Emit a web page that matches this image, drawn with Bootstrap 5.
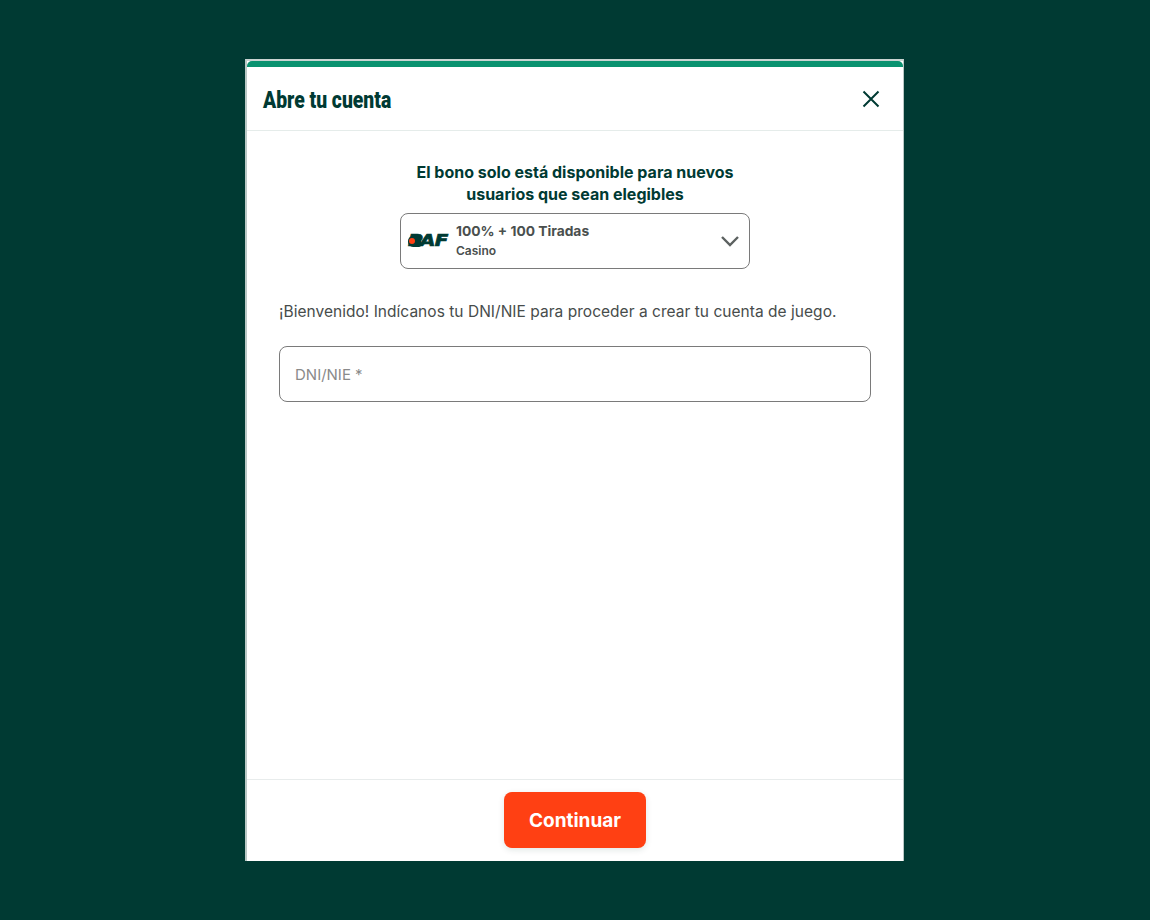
<!DOCTYPE html>
<html lang="es">
<head>
  <meta charset="UTF-8">
  <title>Abre tu cuenta</title>
  <link href="https://cdn.jsdelivr.net/npm/bootstrap@5.3.3/dist/css/bootstrap.min.css" rel="stylesheet">
  <style>
    body { background: #003A33; font-family: "Inter", "Noto Sans", sans-serif; height: 920px; overflow: hidden; }
    .page-wrap { height: 920px; padding-top: 59px; }
    .signup-box { width: 659px; height: 802px; margin-right: 1px; background: #fff; border: solid #b9c8c5; border-width: 2px 1px 0 2px; border-top-color: #c9d4d2; }
    .top-strip { height: 6px; background: #0A9270; border-radius: 5px 5px 0 0; }
    .signup-head { height: 64px; padding: 4px 16px 0; border-bottom: 1px solid #e5ecea; }
    .signup-title { font-family: "Roboto", sans-serif; font-weight: 900; font-size: 23px; color: #003A33; transform: scaleX(.84); transform-origin: left center; white-space: nowrap; margin: 0; }
    .close-x { background: none; border: 0; padding: 0; width: 20px; height: 20px; line-height: 0; margin-right: 6px; margin-top: -4px; }
    .signup-body { padding: 31px 32px 0; }
    .bonus-note { font-size: 16px; line-height: 21.5px; font-weight: 700; color: #003A33; width: 350px; }
    .bonus-select { width: 350px; height: 56px; border: 1px solid #7a7a7a; border-radius: 8px; padding: 0 10px 0 7px; margin-top: 8px; color: #4a4f4e; }
    .paf-logo { position: relative; flex: 0 0 41px; height: 13px; margin-right: 7px; overflow: visible; }
    .paf-letters { display: block; font-family: "DejaVu Sans", sans-serif; font-weight: 700; font-style: italic; font-size: 15px; line-height: 13px; color: #003A33; letter-spacing: -.5px; -webkit-text-stroke: .7px #003A33; transform: scaleX(1.32); transform-origin: left center; }
    .paf-blob { position: absolute; left: 0; top: 1px; width: 13px; height: 11px; border-radius: 5px 2px 2px 5px; background: #003A33; }
    .paf-dot { position: absolute; left: 1px; top: 3px; width: 6px; height: 6px; border-radius: 50%; background: #FF4013; }
    .bonus-name { font-size: 13.8px; line-height: 18px; font-weight: 700; }
    .bonus-kind { font-size: 12px; line-height: 18px; font-weight: 600; margin-top: 2px; }
    .welcome-text { font-size: 15.5px; line-height: 22px; letter-spacing: .03px; color: #474c4b; margin: 32px 0 0; white-space: nowrap; }
    .dni-input { height: 56px; border: 1px solid #7a7a7a; border-radius: 8px; padding: 0 15px; font-size: 15px; margin-top: 23px; color: #4a4f4e; }
    .dni-input::placeholder { color: #8a8a8a; opacity: 1; }
    .signup-foot { height: 82px; border-top: 1px solid #e8ecec; padding-top: 12px; }
    .btn-continue { width: 142px; height: 56px; padding-top: 8px; background: #FF4013; color: #fff; font-size: 19px; font-weight: 700; border: 0; border-radius: 8px; box-shadow: 0 2px 6px rgba(0,58,51,.12); }
    .btn-continue:hover { background: #e83a10; color: #fff; }
  </style>
</head>
<body>
  <div class="page-wrap d-flex justify-content-center">
    <div class="signup-box d-flex flex-column">
      <div class="top-strip"></div>
      <div class="signup-head d-flex align-items-center justify-content-between">
        <h1 class="signup-title">Abre tu cuenta</h1>
        <button class="close-x" type="button" aria-label="Cerrar">
          <svg width="20" height="20" viewBox="0 0 20 20" fill="none" stroke="#003A33" stroke-width="2"><path d="M2.5 2.5l15 15M17.5 2.5l-15 15"/></svg>
        </button>
      </div>
      <div class="signup-body flex-grow-1">
        <div class="d-flex flex-column align-items-center">
          <div class="bonus-note text-center">El bono solo está disponible para nuevos usuarios que sean elegibles</div>
          <div class="bonus-select d-flex align-items-center">
            <span class="paf-logo"><span class="paf-letters">PAF</span><span class="paf-blob"></span><span class="paf-dot"></span></span>
            <div class="flex-grow-1">
              <div class="bonus-name">100% + 100 Tiradas</div>
              <div class="bonus-kind">Casino</div>
            </div>
            <svg width="18" height="12" viewBox="0 0 18 12" fill="none" stroke="#5c6160" stroke-width="2.4"><path d="M1 2l8 8 8-8"/></svg>
          </div>
        </div>
        <p class="welcome-text">¡Bienvenido! Indícanos tu DNI/NIE para proceder a crear tu cuenta de juego.</p>
        <input class="form-control dni-input" type="text" placeholder="DNI/NIE *">
      </div>
      <div class="signup-foot d-flex justify-content-center align-items-start">
        <button class="btn btn-continue" type="button">Continuar</button>
      </div>
    </div>
  </div>
  <script src="https://cdn.jsdelivr.net/npm/bootstrap@5.3.3/dist/js/bootstrap.bundle.min.js"></script>
</body>
</html>
